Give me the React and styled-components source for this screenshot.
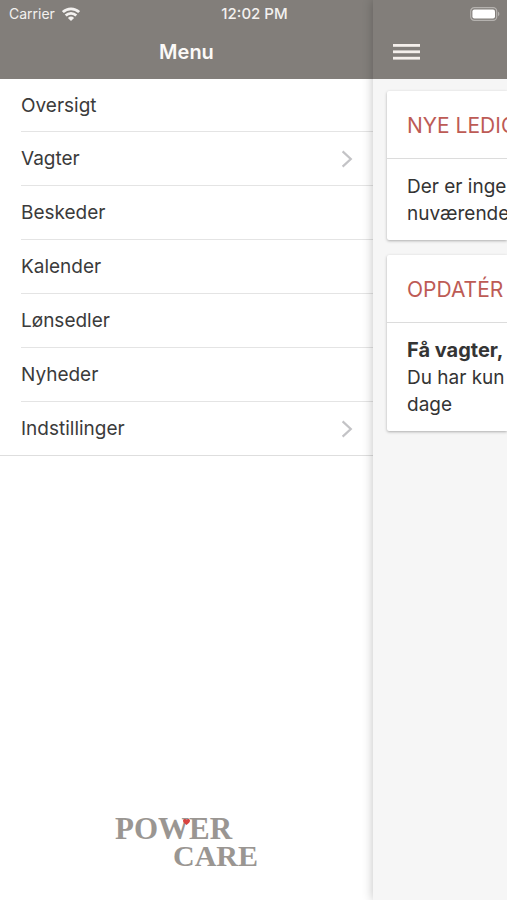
import React from "react";
import styled, { createGlobalStyle } from "styled-components";

const GlobalStyle = createGlobalStyle`
  *, *::before, *::after { box-sizing: border-box; }
  body {
    margin: 0;
    background: #fff;
    color: #3b3b3b;
    font-family: Inter, "Liberation Sans", sans-serif;
  }
`;

const Screen = styled.div`
  position: relative;
  display: flex;
  min-height: 100vh;
  overflow: hidden;
`;

const StatusBar = styled.div`
  position: absolute;
  z-index: 3;
  top: 0;
  left: 0;
  right: 0;
  height: 27px;
  padding: 0 7px 0 9px;
  display: grid;
  grid-template-columns: 1fr auto 1fr;
  align-items: center;
  color: #f3f1ef;
  font-size: 14px;
`;

const Carrier = styled.div`
  display: flex;
  align-items: center;
  gap: 7px;
`;

const Clock = styled.time`
  font-size: 15px;
  font-weight: 500;
`;

const BatterySlot = styled.div`
  display: flex;
  justify-content: flex-end;
`;

const Drawer = styled.aside`
  flex: 0 0 373px;
  max-width: 80vw;
  display: flex;
  flex-direction: column;
  background: #fff;
`;

const HeaderBar = styled.header`
  height: 79px;
  padding: 24px 20px 0;
  display: flex;
  align-items: center;
  justify-content: ${(p) => p.$justify};
  background: #827e7a;
  color: #fbf9f7;
`;

const Title = styled.h1`
  margin: 0;
  font-size: 20px;
  line-height: 28px;
  font-weight: 600;
`;

const MenuList = styled.ul`
  margin: 0;
  padding: 0;
  list-style: none;
  border-bottom: 1px solid #dedede;
`;

const MenuItem = styled.li`
  padding-left: 21px;
`;

const MenuLink = styled.a`
  height: ${(p) => (p.$first || p.$last ? 53 : 54)}px;
  padding-right: 20px;
  display: flex;
  align-items: center;
  justify-content: space-between;
  color: #3b3b3b;
  font-size: 19px;
  text-decoration: none;
  border-bottom: ${(p) => (p.$last ? "0" : "1px solid #e4e4e4")};
`;

const DrawerFooter = styled.footer`
  margin-top: auto;
  padding-bottom: 31px;
  display: flex;
  justify-content: center;
`;

const Logo = styled.div`
  position: relative;
  width: 143px;
  display: flex;
  flex-direction: column;
  color: #9a9692;
  font-family: "Liberation Serif", serif;
  font-weight: 700;
  line-height: 27px;
`;

const LogoLine = styled.span`
  align-self: ${(p) => p.$align};
  font-size: ${(p) => p.$size}px;
`;

const LogoHeart = styled.svg`
  position: absolute;
  top: 4px;
  left: 68px;
`;

const Page = styled.div`
  position: relative;
  z-index: 1;
  flex: 1 1 0;
  min-width: 0;
  background: #f6f6f6;
  box-shadow: 0 0 10px rgba(0, 0, 0, 0.25);
`;

const IconButton = styled.button`
  padding: 0;
  border: 0;
  display: flex;
  background: none;
  color: inherit;
`;

const CardList = styled.main`
  padding: 12px 0 12px 14px;
  display: flex;
  flex-direction: column;
  gap: 15px;
  overflow: hidden;
`;

const Card = styled.section`
  background: #fff;
  border-radius: 2px 0 0 2px;
  box-shadow: 0 1px 3px rgba(0, 0, 0, 0.3);
  white-space: nowrap;
  overflow: hidden;
`;

const CardTitle = styled.h2`
  margin: 0;
  height: 68px;
  padding: 2px 0 0 20px;
  display: flex;
  align-items: center;
  border-bottom: 1px solid #dcdcdc;
  color: #bd5b55;
  font-size: 21px;
  font-weight: 400;
`;

const CardBody = styled.div`
  padding: 14px 0 13px 20px;
  color: #343434;
  font-size: 19px;
  line-height: 27px;
`;

const Line = styled.div`
  font-size: ${(p) => (p.$strong ? 20 : 19)}px;
  font-weight: ${(p) => (p.$strong ? 700 : 400)};
`;

const items = [
  { label: "Oversigt" },
  { label: "Vagter", nested: true },
  { label: "Beskeder" },
  { label: "Kalender" },
  { label: "Lønsedler" },
  { label: "Nyheder" },
  { label: "Indstillinger", nested: true },
];

const cards = [
  { title: "NYE LEDIGE", lines: [{ text: "Der er ingen" }, { text: "nuværende" }] },
  {
    title: "OPDATÉR",
    lines: [{ text: "Få vagter,", strong: true }, { text: "Du har kun" }, { text: "dage" }],
  },
];

const WifiIcon = () => (
  <svg width="18" height="14" viewBox="0 0 18 14" fill="none" stroke="currentColor" strokeWidth="2.7" aria-hidden="true">
    <path d="M0.9 5.1a11.6 11.6 0 0 1 16.2 0" />
    <path d="M3.7 8.5a7.5 7.5 0 0 1 10.6 0" />
    <path d="M9 14 5.9 10.9a4.5 4.5 0 0 1 6.2 0z" fill="currentColor" stroke="none" />
  </svg>
);

const BatteryIcon = () => (
  <svg width="30" height="14" viewBox="0 0 30 14" aria-hidden="true">
    <rect x="0.7" y="0.7" width="26" height="12.6" rx="3.6" fill="none" stroke="#b5b2af" strokeWidth="1.2" />
    <rect x="2.4" y="2.4" width="22.6" height="9.2" rx="2" fill="#fff" />
    <path d="M28 4.8c1.8.6 1.8 3.8 0 4.4z" fill="#b5b2af" />
  </svg>
);

const ChevronIcon = () => (
  <svg width="12" height="18" viewBox="0 0 12 18" fill="none" stroke="#c3c3c6" strokeWidth="2.2" aria-hidden="true">
    <path d="M1.6 1.4 9.8 9l-8.2 7.6" />
  </svg>
);

const BurgerIcon = () => (
  <svg width="27" height="18" viewBox="0 0 27 18" fill="#f4efeb" aria-hidden="true">
    <rect y="1" width="27" height="2.8" />
    <rect y="7.4" width="27" height="2.8" />
    <rect y="13.8" width="27" height="2.8" />
  </svg>
);

export default function App() {
  return (
    <>
      <GlobalStyle />
      <Screen>
        <StatusBar>
          <Carrier>
            Carrier
            <WifiIcon />
          </Carrier>
          <Clock>12:02 PM</Clock>
          <BatterySlot>
            <BatteryIcon />
          </BatterySlot>
        </StatusBar>

        <Drawer>
          <HeaderBar $justify="center">
            <Title>Menu</Title>
          </HeaderBar>
          <nav aria-label="Menu">
            <MenuList>
              {items.map((item, i) => (
                <MenuItem key={item.label}>
                  <MenuLink href="#" $first={i === 0} $last={i === items.length - 1}>
                    {item.label}
                    {item.nested && <ChevronIcon />}
                  </MenuLink>
                </MenuItem>
              ))}
            </MenuList>
          </nav>
          <DrawerFooter>
            <Logo>
              <LogoLine $align="flex-start" $size={31}>POWER</LogoLine>
              <LogoLine $align="flex-end" $size={30}>CARE</LogoLine>
              <LogoHeart width="7" height="6" viewBox="0 0 7 6" aria-hidden="true">
                <path d="M3.5 6C1.2 4.4 0 3.2 0 1.8 0 0 2.6-.6 3.5 1.1 4.4-.6 7 0 7 1.8 7 3.2 5.8 4.4 3.5 6z" fill="#d9433f" />
              </LogoHeart>
            </Logo>
          </DrawerFooter>
        </Drawer>

        <Page>
          <HeaderBar $justify="flex-start">
            <IconButton type="button" aria-label="Menu">
              <BurgerIcon />
            </IconButton>
          </HeaderBar>
          <CardList>
            {cards.map((card) => (
              <Card key={card.title}>
                <CardTitle>{card.title}</CardTitle>
                <CardBody>
                  {card.lines.map((line) => (
                    <Line key={line.text} $strong={line.strong}>
                      {line.text}
                    </Line>
                  ))}
                </CardBody>
              </Card>
            ))}
          </CardList>
        </Page>
      </Screen>
    </>
  );
}
